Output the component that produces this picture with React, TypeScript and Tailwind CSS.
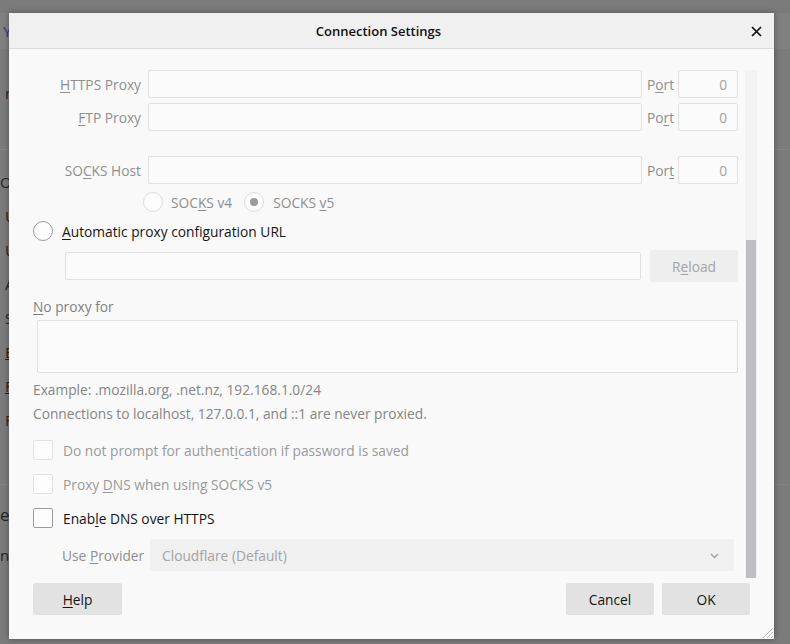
import React from 'react';

const Acc: React.FC<{ text: string; k: number }> = ({ text, k }) => (
    <>
        {text.slice(0, k)}
        <span className="underline underline-offset-2 decoration-1">{text[k]}</span>
        {text.slice(k + 1)}
    </>
);

const Field: React.FC<{ w: string }> = ({ w }) => (
    <div className={`${w} h-[28px] border border-[#e0e0e2] bg-[#fbfbfb] rounded-[2px]`} />
);

const ProxyRow: React.FC<{ label: string; k: number; portK: number; mt: string }> = ({ label, k, portK, mt }) => (
    <div className={`flex items-center h-[28px] pl-[24px] ${mt}`}>
        <span className="w-[109px] pr-[1px] pt-[1px] text-right text-[#8e8e8e]">
            <Acc text={label} k={k} />
        </span>
        <div className="ml-[6px]">
            <Field w="w-[494px]" />
        </div>
        <span className="ml-[5px] w-[31px] pt-[1px] text-[#8e8e8e]">
            <Acc text="Port" k={portK} />
        </span>
        <div className="w-[60px] h-[28px] border border-[#e0e0e2] bg-[#fbfbfb] rounded-[2px] flex items-center justify-end pr-[10px] pt-[1px] text-[#a3a3a3]">
            0
        </div>
    </div>
);

const Radio: React.FC<{ checked?: boolean; enabled?: boolean }> = ({ checked, enabled }) => (
    <div
        className={`w-[20px] h-[20px] rounded-full border bg-[#fdfdfd] flex items-center justify-center ${
            enabled ? 'border-[#9a9a9f]' : 'border-[#dcdcde]'
        }`}
    >
        {checked && <div className="w-[8px] h-[8px] rounded-full bg-[#9c9c9c]" />}
    </div>
);

const Check: React.FC<{ label: React.ReactNode; enabled?: boolean; mt: string }> = ({ label, enabled, mt }) => (
    <div className={`flex items-center h-[20px] pl-[24px] ${mt}`}>
        <div
            className={`w-[20px] h-[20px] rounded-[2px] border bg-[#fdfdfd] ${
                enabled ? 'border-[#9a9a9f]' : 'border-[#e1e1e3]'
            }`}
        />
        <span className={`ml-[10px] pt-[1px] ${enabled ? 'text-[#151515]' : 'text-[#9a9a9a]'}`}>{label}</span>
    </div>
);

const Btn: React.FC<{ children: React.ReactNode; w: string }> = ({ children, w }) => (
    <div className={`${w} h-[32px] rounded-[2px] bg-[#e2e2e2] flex items-center justify-center pt-[1px] text-[#151515]`}>
        {children}
    </div>
);

export default function App() {
    return (
        <div className="relative w-[790px] h-[644px] overflow-hidden bg-[#7b7b7b] font-['Open_Sans',sans-serif] text-[13.75px] leading-[20px]">
            {/* page behind the dimmed overlay */}
            <div className="flex flex-col text-[15px] text-[#242424]">
                <div className="h-[13px]" />
                <div className="h-[36px] bg-[#808080] flex items-center pl-[3px] text-[#2e3b78]">Y</div>
                <div className="h-[84px] flex items-center pl-[5px] pt-[4px]">r</div>
                <div className="h-px bg-[#858585] mt-[16px]" />
                <div className="flex flex-col pt-[22px] gap-[14px]">
                    <span className="h-[20px]">O</span>
                    <span className="pl-[5px] h-[20px]">U</span>
                    <span className="pl-[5px] h-[20px]">U</span>
                    <span className="pl-[5px] h-[20px]">A</span>
                    <span className="pl-[5px] h-[20px]">S</span>
                    <span className="pl-[5px] h-[20px] underline">E</span>
                    <span className="pl-[5px] h-[20px] underline">F</span>
                    <span className="pl-[5px] h-[20px]">F</span>
                </div>
                <div className="h-px bg-[#858585] mt-[54px]" />
                <span className="mt-[20px] text-[17px]">e</span>
                <span className="mt-[20px]">n</span>
            </div>

            {/* dialog */}
            <div className="absolute left-[9px] top-[13px] w-[765px] h-[626px] bg-[#f9f9f9] flex flex-col shadow-[0_0_6px_rgba(0,0,0,0.35)]">
                <div className="relative h-[36px] shrink-0 bg-[#f0f0f0] border-b border-[#dadada] flex items-center justify-center pr-[26px]">
                    <span className="text-[13px] font-semibold text-[#111]">Connection Settings</span>
                    <svg className="absolute right-[12px] top-[13px]" width="11" height="11" viewBox="0 0 11 11">
                        <path d="M1 1L10 10M10 1L1 10" stroke="#111" strokeWidth="1.7" />
                    </svg>
                </div>

                <div className="flex h-[529px] shrink-0">
                    <div className="w-[736px] flex flex-col pt-[21px]">
                        <ProxyRow label="HTTPS Proxy" k={0} portK={1} mt="" />
                        <ProxyRow label="FTP Proxy" k={0} portK={2} mt="mt-[5px]" />
                        <ProxyRow label="SOCKS Host" k={2} portK={3} mt="mt-[25px]" />

                        <div className="flex items-center h-[20px] mt-[8px] pl-[134px] text-[#8e8e8e]">
                            <Radio />
                            <span className="ml-[8px] pt-[1px]">
                                <Acc text="SOCKS v4" k={3} />
                            </span>
                            <div className="ml-[12px]">
                                <Radio checked />
                            </div>
                            <span className="ml-[9px] pt-[1px]">
                                <Acc text="SOCKS v5" k={6} />
                            </span>
                        </div>

                        <div className="flex items-center h-[20px] mt-[9px] pl-[24px]">
                            <Radio enabled />
                            <span className="ml-[9px] pt-[1px] text-[#151515]">
                                <Acc text="Automatic proxy configuration URL" k={0} />
                            </span>
                        </div>

                        <div className="flex items-center h-[32px] mt-[9px] pl-[56px]">
                            <Field w="w-[576px]" />
                            <div className="ml-[9px] w-[88px] h-[32px] rounded-[2px] bg-[#eeeeee] flex items-center justify-center pt-[1px] text-[#a3a3a3]">
                                <Acc text="Reload" k={1} />
                            </div>
                        </div>

                        <div className="mt-[15px] pl-[24px] text-[#808080]">
                            <Acc text="No proxy for" k={0} />
                        </div>
                        <div className="mt-[3px] ml-[28px] w-[701px] h-[53px] border border-[#e0e0e2] bg-[#fbfbfb] rounded-[2px]" />
                        <div className="mt-[7px] pl-[24px] text-[#858585]">Example: .mozilla.org, .net.nz, 192.168.1.0/24</div>
                        <div className="mt-[4px] pl-[24px] text-[#858585]">
                            Connections to localhost, 127.0.0.1, and ::1 are never proxied.
                        </div>

                        <Check mt="mt-[16px]" label={<Acc text="Do not prompt for authentication if password is saved" k={25} />} />
                        <Check mt="mt-[14px]" label={<Acc text="Proxy DNS when using SOCKS v5" k={6} />} />
                        <Check mt="mt-[14px]" enabled label={<Acc text="Enable DNS over HTTPS" k={4} />} />

                        <div className="flex items-center h-[32px] mt-[11px] pl-[53px]">
                            <span className="w-[88px] pt-[1px] text-[#8e8e8e]">
                                <Acc text="Use Provider" k={4} />
                            </span>
                            <div className="w-[584px] h-[32px] rounded-[2px] bg-[#f0f0f0] flex items-center justify-between pl-[12px] pr-[15px] pt-[1px] text-[#a3a3a3]">
                                <span>Cloudflare (Default)</span>
                                <svg width="9" height="6" viewBox="0 0 9 6">
                                    <path d="M1 1L4.5 4.5L8 1" fill="none" stroke="#a0a0a0" strokeWidth="1.4" />
                                </svg>
                            </div>
                        </div>
                    </div>

                    <div className="w-[12px] pt-[21px] flex">
                        <div className="flex-1 bg-[#f3f3f3] flex flex-col justify-end px-px">
                            <div className="h-[338px] bg-[#bdbfc2]" />
                        </div>
                    </div>
                </div>

                <div className="flex items-start pt-[5px] pl-[24px] pr-[24px]">
                    <Btn w="w-[89px]">
                        <Acc text="Help" k={0} />
                    </Btn>
                    <div className="flex-1" />
                    <Btn w="w-[88px]">Cancel</Btn>
                    <div className="ml-[8px]">
                        <Btn w="w-[88px]">OK</Btn>
                    </div>
                </div>

                <svg className="absolute right-0 bottom-0" width="14" height="14" viewBox="0 0 14 14">
                    <path d="M13 3L3 13M13 7L7 13M13 11L11 13" stroke="#b5b5b5" strokeWidth="1" />
                </svg>
            </div>
        </div>
    );
}
